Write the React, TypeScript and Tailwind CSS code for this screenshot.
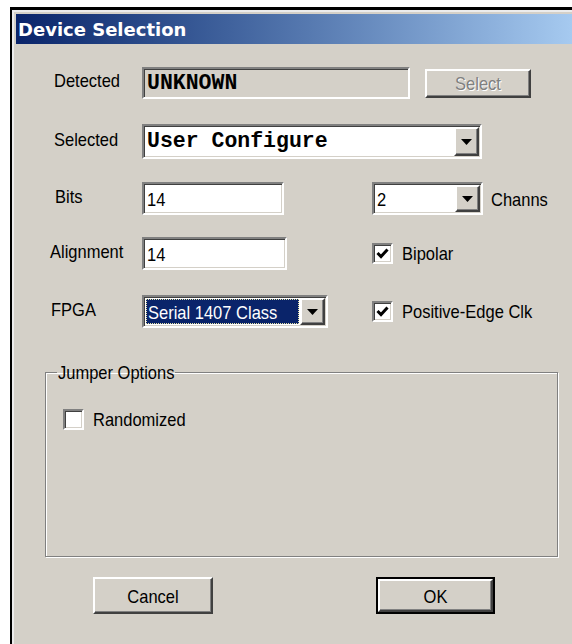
import React from "react";

const sunken =
  "border-2 border-t-[#808080] border-l-[#808080] border-b-white border-r-white shadow-[inset_1px_1px_0_#404040,inset_-1px_-1px_0_#d4d0c8]";
const raised =
  "border-2 border-t-white border-l-white border-b-[#404040] border-r-[#404040] shadow-[inset_-1px_-1px_0_#808080]";
// tall, narrow dialog text
const label =
  "inline-block origin-center scale-y-[1.16] font-['Liberation_Sans',Arial,sans-serif] text-[16.5px] leading-[20px] text-black";
const rowLabel = `${label} -translate-y-[3px]`;
const mono = "font-['Liberation_Mono','Courier_New',monospace] font-bold text-[21.5px] text-black";

function DropButton() {
  return (
    <div className={`flex w-[25px] shrink-0 items-center justify-center bg-[#d4d0c8] ${raised}`}>
      <svg width="11" height="6" viewBox="0 0 11 6">
        <path d="M0 0h11L5.5 6z" fill="#000" />
      </svg>
    </div>
  );
}

function Check({ checked }: { checked?: boolean }) {
  return (
    <div className={`flex size-[21px] shrink-0 items-center justify-center bg-white ${sunken}`}>
      {checked && (
        <svg width="13" height="11" viewBox="0 0 13 11">
          <path d="M1.5 5 L5 8.5 L11.5 1.5" fill="none" stroke="#000" strokeWidth="3" />
        </svg>
      )}
    </div>
  );
}

export default function App() {
  return (
    <div className="h-[644px] w-[572px] overflow-hidden bg-white pl-[10px] pt-[7px]">
      <div className="h-full border-l-2 border-t-[3px] border-black">
        <div className="h-full border-l-2 border-t-2 border-[#ececec] bg-[#d4d0c8] pl-[2px] pt-[2px]">
          {/* caption */}
          <div className="flex h-[30px] items-center bg-linear-to-r from-[#0a246a] to-[#a6caf0] pl-[2px]">
            <span className="font-['DejaVu_Sans',sans-serif] text-[18px] font-bold text-white">Device Selection</span>
          </div>

          {/* Detected */}
          <div className="mt-[23px] flex h-[32px] items-center pl-[38px]">
            <span className={`w-[88px] ${rowLabel}`}>Detected</span>
            <div className={`flex h-full w-[268px] items-center pl-[3px] ${sunken}`}>
              <span className={mono}>UNKNOWN</span>
            </div>
            <div className={`ml-[15px] flex h-[29px] w-[106px] items-center justify-center ${raised}`}>
              <span className={`${label} !text-[#808080] [text-shadow:1px_1px_0_#fff]`}>Select</span>
            </div>
          </div>

          {/* Selected */}
          <div className="mt-[25px] flex h-[35px] items-center pl-[38px]">
            <span className={`w-[88px] ${rowLabel}`}>Selected</span>
            <div className={`flex h-full w-[340px] bg-white p-px ${sunken}`}>
              <div className="flex flex-1 items-center pl-[2px]">
                <span className={mono}>User Configure</span>
              </div>
              <DropButton />
            </div>
          </div>

          {/* Bits / Channs */}
          <div className="mt-[23px] flex h-[33px] items-center pl-[39px]">
            <span className={`w-[87px] ${rowLabel}`}>Bits</span>
            <div className={`flex h-full w-[142px] items-center bg-white pl-[3px] ${sunken}`}>
              <span className={label}>14</span>
            </div>
            <div className={`ml-[88px] flex h-full w-[111px] bg-white p-px ${sunken}`}>
              <div className="flex flex-1 items-center pl-[2px]">
                <span className={label}>2</span>
              </div>
              <DropButton />
            </div>
            <span className={`ml-[8px] ${label}`}>Channs</span>
          </div>

          {/* Alignment / Bipolar */}
          <div className="mt-[22px] flex h-[33px] items-center pl-[34px]">
            <span className={`w-[92px] ${rowLabel}`}>Alignment</span>
            <div className={`flex h-full w-[145px] items-center bg-white pl-[3px] ${sunken}`}>
              <span className={label}>14</span>
            </div>
            <div className="ml-[85px] flex items-center gap-[9px]">
              <Check checked />
              <span className={`${label} -translate-y-[1px]`}>Bipolar</span>
            </div>
          </div>

          {/* FPGA / Positive-Edge Clk */}
          <div className="mt-[25px] flex h-[33px] items-center pl-[35px]">
            <span className={`w-[91px] ${rowLabel}`}>FPGA</span>
            <div className={`flex h-full w-[186px] bg-white p-px ${sunken}`}>
              <div className="flex flex-1 p-[1px]">
                <div className="flex flex-1 items-center border border-dotted border-[#e8e4a8] bg-[#0a246a] pl-[1px]">
                  <span className={`${label} whitespace-nowrap !text-white`}>Serial 1407 Class</span>
                </div>
              </div>
              <DropButton />
            </div>
            <div className="ml-[44px] flex items-center gap-[9px]">
              <Check checked />
              <span className={`${label} -translate-y-[1px]`}>Positive-Edge Clk</span>
            </div>
          </div>

          {/* Jumper Options group */}
          <fieldset className="ml-[29px] mt-[34px] h-[195px] w-[513px] border border-[#808080] pl-[17px] pt-[27px] shadow-[inset_1px_1px_0_#fff,1px_1px_0_#fff]">
            <legend className={`-ml-[6px] px-[1px] ${label}`}>Jumper Options</legend>
            <div className="flex items-center gap-[9px]">
              <Check />
              <span className={`${label} -translate-y-[1px]`}>Randomized</span>
            </div>
          </fieldset>

          {/* buttons */}
          <div className="mt-[20px] flex">
            <div className={`ml-[77px] flex h-[37px] w-[120px] items-center justify-center ${raised}`}>
              <span className={label}>Cancel</span>
            </div>
            <div className="ml-[163px] h-[37px] w-[119px] border-2 border-black">
              <div className={`flex h-full items-center justify-center ${raised}`}>
                <span className={label}>OK</span>
              </div>
            </div>
          </div>
        </div>
      </div>
    </div>
  );
}
